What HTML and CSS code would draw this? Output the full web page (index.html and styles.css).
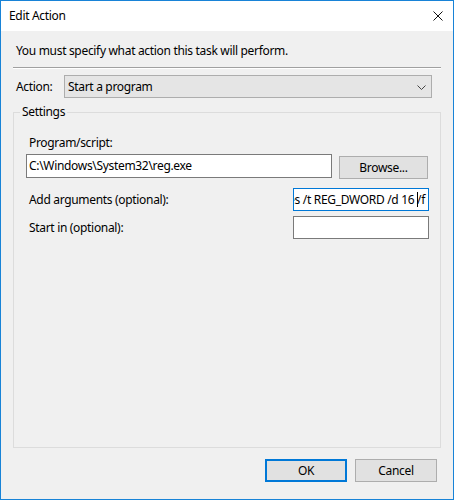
FILE: index.html
```html
<!DOCTYPE html>
<html>
<head>
<meta charset="utf-8">
<link rel="stylesheet" href="styles.css">
</head>
<body>
<div class="window">
  <div class="titlebar">
    <span class="title">Edit Action</span>
    <svg class="close" width="10" height="10" viewBox="0 0 10 10"><path d="M0.5 0.5 L9.5 9.5 M9.5 0.5 L0.5 9.5" stroke="#111" stroke-width="1" fill="none"/></svg>
  </div>
  <div class="instr">You must specify what action this task will perform.</div>
  <div class="sep"></div>
  <div class="action-row">
    <span class="action-label">Action:</span>
    <div class="select">
      <span>Start a program</span>
      <svg class="chev" width="9" height="5" viewBox="0 0 9 5"><path d="M0.5 0.5 L4.5 4.5 L8.5 0.5" stroke="#444" stroke-width="1" fill="none"/></svg>
    </div>
  </div>
  <fieldset class="group">
    <legend class="legend">Settings</legend>
    <div class="inner">
      <div class="lbl">Program/script:</div>
      <div class="row1">
        <div class="textbox tb-prog">C:\Windows\System32\reg.exe</div>
        <div class="btn browse">Browse...</div>
      </div>
      <div class="row row2">
        <span class="lbl">Add arguments (optional):</span>
        <div class="textbox tb-small focused"><span class="scroll">add "HKLM\Software\Microsoft\Windows\CurrentVersion\Policies\Explorer" /v NoDrives /t REG_DWORD /d 16 <span class="caret"></span>/f</span></div>
      </div>
      <div class="row row3">
        <span class="lbl">Start in (optional):</span>
        <div class="textbox tb-small"></div>
      </div>
    </div>
  </fieldset>
  <div class="buttons">
    <div class="btn default">OK</div>
    <div class="btn">Cancel</div>
  </div>
</div>
</body>
</html>
```

FILE: styles.css
```css
html, body {
  margin: 0;
  padding: 0;
  background: #f0f0f0;
}
.window {
  width: 454px;
  height: 500px;
  box-sizing: border-box;
  border: 1px solid #1883d7;
  background: #f0f0f0;
  display: flex;
  flex-direction: column;
  font-family: "Noto Sans", "Open Sans", sans-serif;
  font-size: 12px;
  line-height: 16px;
  letter-spacing: -0.32px;
  color: #000;
}
.titlebar {
  height: 30px;
  flex: none;
  background: #fff;
  display: flex;
  align-items: center;
  justify-content: space-between;
  padding: 0 10px 0 8px;
}
.title {
  font-size: 12px;
  margin-top: -1px;
}
.close {
  display: block;
  margin-top: -1px;
}
.instr {
  margin: 12px 15px 0;
}
.sep {
  margin: 8px 12px 0;
  height: 0;
  border-top: 1px solid #a0a0a0;
  border-bottom: 1px solid #fff;
}
.action-row {
  display: flex;
  align-items: center;
  margin: 6px 21px 0 15px;
}
.action-label {
  width: 48px;
  flex: none;
}
.select {
  flex: 1;
  height: 23px;
  box-sizing: border-box;
  border: 1px solid #adadad;
  background: #e5e5e5;
  display: flex;
  align-items: center;
  justify-content: space-between;
  padding: 0 5px 0 3px;
}
.chev {
  display: block;
  margin-top: 1px;
}
.group {
  margin: 6px 12px 0;
  padding: 0;
  border: 1px solid #dcdcdc;
  flex: 1;
  min-height: 0;
  min-width: 0;
}
.legend {
  margin-left: 6px;
  padding: 0 2px;
  line-height: 16px;
}
.inner {
  padding: 15px 11px 0 12px;
}
.lbl {
  margin-left: 3px;
}
.row1 {
  display: flex;
  align-items: flex-start;
  margin-top: 3px;
}
.textbox {
  box-sizing: border-box;
  background: #fff;
  border: 1px solid #7a7a7a;
  height: 23px;
  padding: 0 2px;
  display: flex;
  align-items: center;
  white-space: nowrap;
  overflow: hidden;
}
.tb-prog {
  width: 306px;
  height: 24px;
  flex: none;
}
.btn {
  box-sizing: border-box;
  width: 82px;
  height: 23px;
  border: 1px solid #adadad;
  background: #e1e1e1;
  display: flex;
  align-items: center;
  justify-content: center;
}
.browse {
  width: 89px;
  margin-left: 7px;
  margin-top: 2px;
}
.row {
  display: flex;
  align-items: center;
  justify-content: space-between;
}
.row2 {
  margin-top: 9px;
}
.row3 {
  margin-top: 5px;
}
.tb-small {
  width: 136px;
  flex: none;
  justify-content: flex-end;
}
.focused {
  border-color: #0078d7;
}
.scroll {
  flex: none;
  padding-right: 1px;
}
.caret {
  display: inline-block;
  width: 1px;
  height: 15px;
  background: #000;
  vertical-align: -3px;
  margin-right: -1px;
}
.buttons {
  display: flex;
  justify-content: flex-end;
  gap: 8px;
  margin: 11px 16px 17px 0;
}
.default {
  border: 2px solid #0078d7;
}
```
